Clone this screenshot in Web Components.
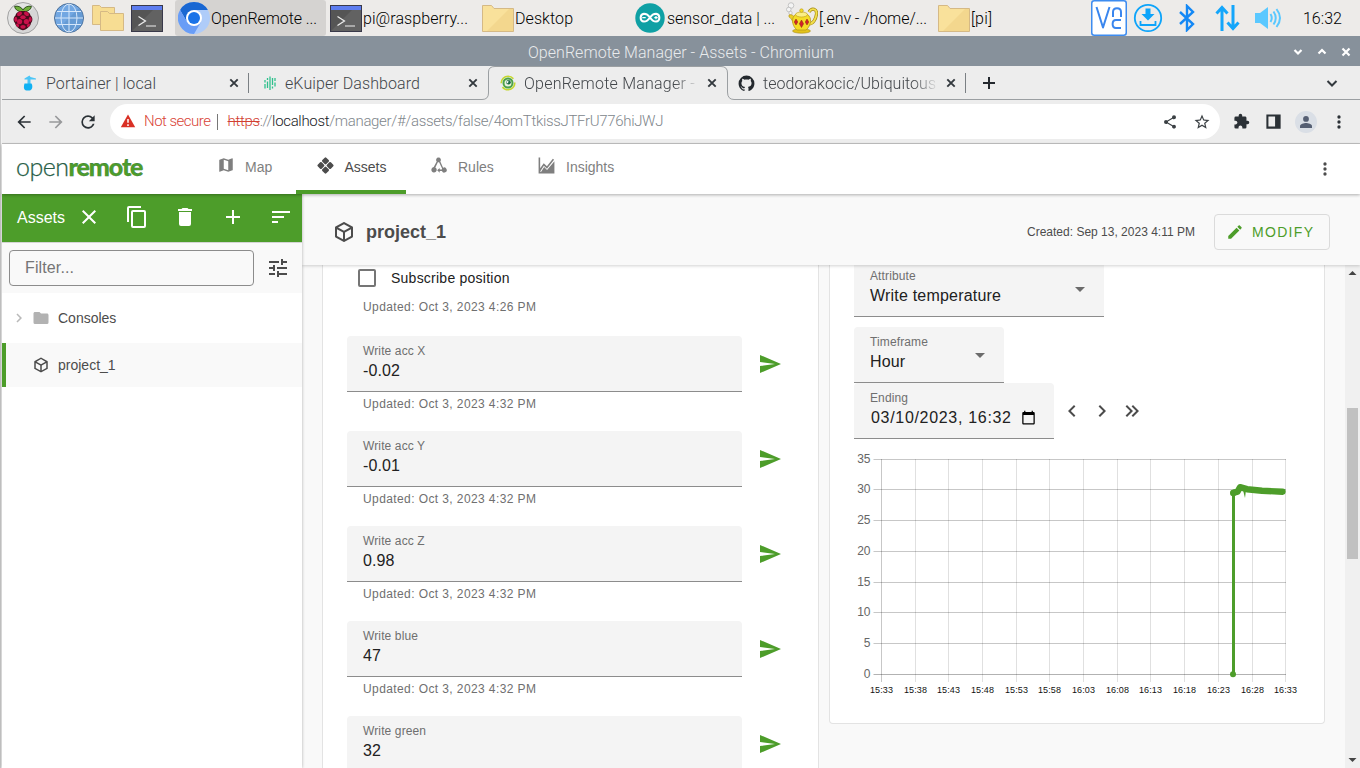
<!DOCTYPE html>
<html lang="en">
<head>
<meta charset="utf-8">
<title>OpenRemote Manager - Assets</title>
<style>
html,body{margin:0;height:100%;overflow:hidden;background:#ededed}
</style>
</head>
<body>
<desktop-screen></desktop-screen>
<script>
const svg = (w, h, vb, body) => `<svg width="${w}" height="${h}" viewBox="${vb}" style="display:block">${body}</svg>`;

/* Multi-coloured pictures used by the task bar and the browser tabs: [width, height, viewBox, body] */
const PICTURES = {
  raspberry: [34, 34, '0 0 34 34', `<defs><linearGradient id="g" x1="0" y1="0" x2="1" y2="1"><stop offset=".5" stop-color="#e3e3e3"/><stop offset=".5" stop-color="#d6d6d6"/></linearGradient></defs>
    <circle cx="17" cy="17" r="15.5" fill="url(#g)" stroke="#a2a2a2"/>
    <path d="M17 11C14 11 9 9.500 8.600 5.300C12 4.600 15.500 6 17 9C18.500 6 22 4.600 25.400 5.300C25 9.500 20 11 17 11Z" fill="#6fae3a" stroke="#1d3a12" stroke-width=".8"/>
    <path d="M17 10C20 9.500 24 11 24.500 14.500C27 16.500 27 20 25 22C24.500 26 20 28.500 17 29.300C14 28.500 9.500 26 9 22C7 20 7 16.500 9.500 14.500C10 11 14 9.500 17 10Z" fill="#4a0a1c"/>
    <g fill="#c8104a"><ellipse cx="13.500" cy="12.800" rx="2.700" ry="1.900" transform="rotate(-30 13.500 12.800)"/><ellipse cx="20.500" cy="12.800" rx="2.700" ry="1.900" transform="rotate(30 20.500 12.800)"/><ellipse cx="17" cy="16.300" rx="2.700" ry="2"/><ellipse cx="9.800" cy="18.300" rx="1.500" ry="2.600"/><ellipse cx="24.200" cy="18.300" rx="1.500" ry="2.600"/><circle cx="13.600" cy="20.600" r="2.600"/><circle cx="20.400" cy="20.600" r="2.600"/><ellipse cx="17" cy="25.800" rx="2.700" ry="1.900"/><ellipse cx="11.600" cy="24.200" rx="1.300" ry="1.900" transform="rotate(-35 11.600 24.200)"/><ellipse cx="22.400" cy="24.200" rx="1.300" ry="1.900" transform="rotate(35 22.400 24.200)"/></g>`],
  globe: [32, 32, '0 0 32 32', `<circle cx="16" cy="16" r="14.500" fill="#72a7e2" stroke="#4d6f97"/><path d="M6 26L26 6A14 14 0 0 1 6 26Z" fill="#5f92cc" opacity=".6"/><g fill="none" stroke="#d6e7fa" stroke-width="1"><path d="M16 2V30M2 16H30M4 9.500H28M4 22.500H28"/><ellipse cx="16" cy="16" rx="8" ry="14"/></g>`],
  folders: [33, 28, '0 0 33 28', `<g fill="#f7dd93" stroke="#d5b985"><path d="M.5 20.500V1.500H7.500L9.500 3.500H22.500V20.500Z"/><path d="M8.500 26.500V7.500H15.500L17.500 9.500H31.500V26.500Z"/></g>`],
  folder: [32, 27, '0 0 32 27', `<path d="M.5 26.500V.5H9.500L12 3.500H31.500V26.500Z" fill="#f9e19b" stroke="#d5b985"/><path d="M5 26L27 4H31V26Z" fill="#f3d78e"/>`],
  terminal: [32, 27, '0 0 32 27', `<rect x=".5" y=".5" width="31" height="26" fill="#555" stroke="#39394a"/><path d="M1 26L22 5H31V26Z" fill="#626262"/><rect x="1" y="1" width="30" height="4" fill="#5d7df0"/><path d="M7.500 11.500L14.500 16L7.500 20.500M15 21H25" fill="none" stroke="#eee" stroke-width="1.200"/>`],
  chromium: [32, 32, '0 0 32 32', `<circle cx="16" cy="16" r="16" fill="#afccf9"/><path d="M16 0A16 16 0 0 1 29.900 8H16L9 20L2.100 8A16 16 0 0 1 16 0Z" fill="#1967d2"/><path d="M2.100 8A16 16 0 0 0 16 32L23 20L16 24L9 20Z" fill="#699df6"/><circle cx="16" cy="16" r="8" fill="#fff"/><circle cx="16" cy="16" r="6" fill="#1a73e8"/>`],
  arduino: [32, 32, '0 0 32 32', `<circle cx="16" cy="16" r="14.700" fill="#0fa0a4"/><path d="M16 15.500C14 12.500 12 11.700 10 11.700A4 4 0 0 0 10 19.600C12 19.600 14 18.500 16 15.500C18 12.500 20 11.700 22 11.700A4 4 0 0 1 22 19.600C20 19.600 18 18.500 16 15.500Z" fill="none" stroke="#fff" stroke-width="2"/><path d="M8.300 15.600H11.700M20.300 15.600H23.700M22 13.900V17.300" stroke="#fff" stroke-width="1.200"/>`],
  teapot: [32, 32, '0 0 32 32', `<g fill="#f4f4f4" stroke="#b9b9b9" stroke-width=".8"><circle cx="5" cy="3.500" r="2.800"/><circle cx="2.800" cy="7.500" r="2.300"/><circle cx="4.500" cy="11" r="1.700"/></g>
    <path d="M23 10C26 5 31 7 30.500 12S27 22 23 22" fill="none" stroke="#a68b14" stroke-width="3.200"/><path d="M23 10C26 5 31 7 30.500 12S27 22 23 22" fill="none" stroke="#f3e04d" stroke-width="1.800"/>
    <path d="M3 13C6 12 8 14 9 16L9 23C6 20 6 16 3 15Z" fill="#ecd023" stroke="#b8981a" stroke-width=".7"/>
    <ellipse cx="15.500" cy="29" rx="9" ry="2.200" fill="#e3c31b" stroke="#a68b14" stroke-width=".6"/>
    <path d="M8 14C9 10.500 22 10.500 23 14C26.500 18 23.500 25.500 20 28H11C7 25 5 18 8 14Z" fill="#f5dc26" stroke="#b8981a" stroke-width=".8"/><ellipse cx="15.500" cy="12.500" rx="6" ry="2.500" fill="#fbef84" stroke="#b8981a" stroke-width=".6"/><circle cx="15.500" cy="8.600" r="1.800" fill="#f5dc26" stroke="#b8981a" stroke-width=".6"/>
    <g fill="#d3202b" stroke="#8a2c10" stroke-width=".5"><path d="M10 17L11.800 20L10 23L8.200 20Z"/><path d="M15.500 18L17.600 21.800L15.500 25.500L13.400 21.800Z"/><path d="M21 17L22.800 20L21 23L19.200 20Z"/></g>`],
  vnc: [36, 36, '0 0 36 36', `<rect x=".75" y=".75" width="34.500" height="34.500" rx="2.500" fill="#fff" stroke="#3d8cf0" stroke-width="1.500"/><g fill="none" stroke="#3a86ee" stroke-width="2"><path d="M5.500 7L12 27.500L18.500 7" stroke-linejoin="round"/><path d="M22 17V12C22 7 30 7 30 12V17M30 20H25C20.500 20 20.500 28 25 28H30"/></g>`],
  download: [30, 30, '0 0 30 30', `<circle cx="15" cy="15" r="13.200" fill="none" stroke="#0da4fa" stroke-width="1.800"/><path d="M12.500 5.500H17.500V11H21.500L15 17.500L8.500 11H12.500Z" fill="#0da4fa"/><path d="M7.500 18V22H22.500V18" fill="none" stroke="#0da4fa" stroke-width="1.800"/>`],
  bluetooth: [18, 28, '0 0 18 28', `<path d="M2 8L15 20L9 26V2L15 8L2 20" fill="none" stroke="#1488f5" stroke-width="2.400"/>`],
  network: [26, 26, '0 0 26 26', `<path d="M7 26V3M1.500 8.500L7 2.500L12.500 8.500M18 0V23M12.500 17.500L18 23.500L23.500 17.500" fill="none" stroke="#14a6fb" stroke-width="3"/>`],
  sound: [28, 24, '0 0 28 24', `<path d="M0 7H5L13 1V23L5 17H0Z" fill="#5ac8ff"/><g fill="none" stroke="#5ac8ff" stroke-width="2"><path d="M15.500 8Q18 12 15.500 16M18.500 5.500Q23 12 18.500 18.500M21.500 3Q28.500 12 21.500 21"/></g>`],
  portainer: [16, 16, '0 0 16 16', `<path d="M2.500 3.500L7.500 .5L8.500 2L14 3.500V4.500H8.500V13H4L5.500 10V4.500H2.500Z" fill="#4cc6f7"/><path d="M2.500 8.500H9.500C11 11 10.500 15 7.500 15.500H4.500C1.500 15 1.500 12 2.500 8.500Z" fill="#10b1f3"/>`],
  kuiper: [16, 16, '0 0 16 16', `<path d="M3.500 5V7.500M3.500 9V13.500M6 3V5M6 6.500V13M8.500 1.500V15M11 3V10M11 11.500V13.500M13.500 3V6M13.500 7.500V11.500" transform="translate(.5 0)" stroke="#2fc08d" stroke-width="1.300"/>`],
  openremote: [16, 16, '0 0 16 16', `<circle cx="8" cy="8" r="6.800" fill="none" stroke="#c4d82f" stroke-width="1.600" stroke-dasharray="17 4"/><circle cx="8" cy="8" r="4.500" fill="#e9f2df" stroke="#4da34a" stroke-width="2"/><circle cx="8.500" cy="7.300" r="2.300" fill="#1d6b45"/><path d="M8 8.500L8.500 5.500L6 7Z" fill="#fff"/>`],
  profile: [22, 22, '0 0 22 22', `<circle cx="11" cy="11" r="11" fill="#dadfe6"/><circle cx="11" cy="7.900" r="2.900" fill="#555f73"/><path d="M5 17V15.200C5 13 9 12.100 11 12.100S17 13 17 15.200V17Z" fill="#555f73"/>`],
  warning: [16, 16, '0 0 16 16', `<path d="M8 .5L15.200 13.300H.8Z" fill="#d93025"/><path d="M8 5V8.800M8 10.300V11.900" stroke="#fff" stroke-width="1.500"/>`]
};

/* Rounded diamond around the point that precedes it */
const DIAMOND = 'm-1,-4q1,-1 2,0l3,3q1,1 0,2l-3,3q-1,1 -2,0l-3,-3q-1,-1 0,-2z';

/* Single-colour glyphs on a 24-unit grid */
const GLYPHS = {
  map: 'M15,19L9,16.89V5L15,7.11M20.5,3C20.44,3 20.39,3 20.34,3L15,5.1L9,3L3.36,4.9C3.15,4.97 3,5.15 3,5.38V20.5A0.5,0.5 0 0,0 3.5,21C3.55,21 3.61,21 3.66,20.97L9,18.9L15,21L20.64,19.1C20.85,19 21,18.85 21,18.62V3.5A0.5,0.5 0 0,0 20.5,3Z',
  cube: 'M21,16.5C21,16.88 20.79,17.21 20.47,17.38L12.57,21.82C12.41,21.94 12.21,22 12,22C11.79,22 11.59,21.94 11.43,21.82L3.53,17.38C3.21,17.21 3,16.88 3,16.5V7.5C3,7.12 3.21,6.79 3.53,6.62L11.43,2.18C11.59,2.06 11.79,2 12,2C12.21,2 12.41,2.06 12.57,2.18L20.47,6.62C20.79,6.79 21,7.12 21,7.5V16.5M12,4.15L6.04,7.5L12,10.85L17.96,7.5L12,4.15M5,15.91L11,19.29V12.58L5,9.21V15.91M19,15.91V9.21L13,12.58V19.29L19,15.91Z',
  close: 'M19,6.41L17.59,5L12,10.59L6.41,5L5,6.41L10.59,12L5,17.59L6.41,19L12,13.41L17.59,19L19,17.59L13.41,12L19,6.41Z',
  copy: 'M19,21H8V7H19M19,5H8A2,2 0 0,0 6,7V21A2,2 0 0,0 8,23H19A2,2 0 0,0 21,21V7A2,2 0 0,0 19,5M16,1H4A2,2 0 0,0 2,3V17H4V3H16V1Z',
  trash: 'M19,4H15.5L14.5,3H9.5L8.5,4H5V6H19M6,19A2,2 0 0,0 8,21H16A2,2 0 0,0 18,19V7H6V19Z',
  plus: 'M19,13H13V19H11V13H5V11H11V5H13V11H19V13Z',
  sort: 'M3,13H15V11H3M3,6V8H21V6M3,18H9V16H3V18Z',
  tune: 'M3,17V19H9V17H3M3,5V7H13V5H3M13,21V19H21V17H13V15H11V21H13M7,9V11H3V13H7V15H9V9H7M21,13V11H11V13H21M15,9H17V7H21V5H17V3H15V9Z',
  folder: 'M10,4H4C2.89,4 2,4.89 2,6V18A2,2 0 0,0 4,20H20A2,2 0 0,0 22,18V8C22,6.89 21.1,6 20,6H12L10,4Z',
  send: 'M2,21L23,12L2,3V10L17,12L2,14V21Z',
  pencil: 'M20.71,7.04C21.1,6.65 21.1,6 20.71,5.63L18.37,3.29C18,2.9 17.35,2.9 16.96,3.29L15.12,5.12L18.87,8.87M3,17.25V21H6.75L17.81,9.93L14.06,6.18L3,17.25Z',
  dots: 'M12,16A2,2 0 0,1 14,18A2,2 0 0,1 12,20A2,2 0 0,1 10,18A2,2 0 0,1 12,16M12,10A2,2 0 0,1 14,12A2,2 0 0,1 12,14A2,2 0 0,1 10,12A2,2 0 0,1 12,10M12,4A2,2 0 0,1 14,6A2,2 0 0,1 12,8A2,2 0 0,1 10,6A2,2 0 0,1 12,4Z',
  left: 'M15.41,16.58L10.83,12L15.41,7.41L14,6L8,12L14,18L15.41,16.58Z',
  right: 'M8.59,16.58L13.17,12L8.59,7.41L10,6L16,12L10,18L8.59,16.58Z',
  dright: 'M5.59,7.41L7,6L13,12L7,18L5.59,16.59L10.17,12L5.59,7.41M11.59,7.41L13,6L19,12L13,18L11.59,16.59L16.17,12L11.59,7.41Z',
  back: 'M20,11V13H8L13.5,18.5L12.08,19.92L4.16,12L12.08,4.08L13.5,5.5L8,11H20Z',
  forward: 'M4,11V13H16L10.5,18.5L11.92,19.92L19.84,12L11.92,4.08L10.5,5.5L16,11H4Z',
  reload: 'M17.65,6.35C16.2,4.9 14.21,4 12,4A8,8 0 0,0 4,12A8,8 0 0,0 12,20C15.73,20 18.84,17.45 19.73,14H17.65C16.83,16.33 14.61,18 12,18A6,6 0 0,1 6,12A6,6 0 0,1 12,6C13.66,6 15.14,6.69 16.22,7.78L13,11H20V4L17.65,6.35Z',
  share: 'M18,16.08C17.24,16.08 16.56,16.38 16.04,16.85L8.91,12.7C8.96,12.47 9,12.24 9,12C9,11.76 8.96,11.53 8.91,11.3L15.96,7.19C16.5,7.69 17.21,8 18,8A3,3 0 0,0 21,5A3,3 0 0,0 18,2A3,3 0 0,0 15,5C15,5.24 15.04,5.47 15.09,5.7L8.04,9.81C7.5,9.31 6.79,9 6,9A3,3 0 0,0 3,12A3,3 0 0,0 6,15C6.79,15 7.5,14.69 8.04,14.19L15.16,18.34C15.11,18.55 15.08,18.77 15.08,19C15.08,20.61 16.39,21.91 18,21.91C19.61,21.91 20.92,20.61 20.92,19A2.92,2.92 0 0,0 18,16.08Z',
  star: 'M12,15.39L8.24,17.66L9.23,13.38L5.91,10.5L10.29,10.13L12,6.09L13.71,10.13L18.09,10.5L14.77,13.38L15.76,17.66M22,9.24L14.81,8.63L12,2L9.19,8.63L2,9.24L7.45,13.97L5.82,21L12,17.27L18.18,21L16.54,13.97L22,9.24Z',
  puzzle: 'M20.5,11H19V7C19,5.89 18.1,5 17,5H13V3.5A2.5,2.5 0 0,0 10.5,1A2.5,2.5 0 0,0 8,3.5V5H4A2,2 0 0,0 2,7V10.8H3.5C5,10.8 6.2,12 6.2,13.5C6.2,15 5,16.2 3.5,16.2H2V20A2,2 0 0,0 4,22H7.8V20.5C7.8,19 9,17.8 10.5,17.8C12,17.8 13.2,19 13.2,20.5V22H17A2,2 0 0,0 19,20V16H20.5A2.5,2.5 0 0,0 23,13.5A2.5,2.5 0 0,0 20.5,11Z',
  panel: 'M3,3H21V21H3V3M5.600,5.600V18.400H14V5.600H5.600Z',
  caret: 'M7,10L12,15L17,10H7Z',
  calendar: 'M20,3h-1V1h-2v2H7V1H5v2H4C2.9,3 2,3.9 2,5v16c0,1.100 .9,2 2,2h16c1.100,0 2,-.9 2,-2V5C22,3.900 21.100,3 20,3zM20,21H4V8h16V21z',
  github: 'M12,2A10,10 0 0,0 2,12C2,16.42 4.87,20.17 8.84,21.5C9.34,21.58 9.5,21.27 9.5,21C9.5,20.77 9.5,20.14 9.5,19.31C6.73,19.91 6.14,17.97 6.14,17.97C5.68,16.81 5.03,16.5 5.03,16.5C4.12,15.88 5.1,15.9 5.1,15.9C6.1,15.97 6.63,16.93 6.63,16.93C7.5,18.45 8.97,18 9.54,17.76C9.63,17.11 9.89,16.67 10.17,16.42C7.95,16.17 5.62,15.31 5.62,11.5C5.62,10.39 6,9.5 6.65,8.79C6.55,8.54 6.2,7.5 6.75,6.15C6.75,6.15 7.59,5.88 9.5,7.17C10.29,6.95 11.15,6.84 12,6.84C12.85,6.84 13.71,6.95 14.5,7.17C16.41,5.88 17.25,6.15 17.25,6.15C17.8,7.5 17.45,8.54 17.35,8.79C18,9.5 18.38,10.39 18.38,11.5C18.38,15.32 16.04,16.16 13.81,16.41C14.17,16.72 14.5,17.33 14.5,18.26C14.5,19.6 14.5,20.68 14.5,21C14.5,21.27 14.66,21.59 15.17,21.5C19.14,20.16 22,16.42 22,12A10,10 0 0,0 12,2Z',
  assets: ['12,6.200', '12,17.800', '6.200,12', '17.800,12'].map(c => `M${c}${DIAMOND}`).join(''),
  rules: 'M12,2A3,3 0 0 1 14.300,7L17.800,14.800A3.200,3.200 0 1 1 16.300,19H13.500V21L10.300,18L13.500,15V17H16.200L16.500,15.700L12.800,7.900A3,3 0 0 1 11.200,7.900L8,14.400A3.400,3.400 0 1 1 6,14L9.700,7A3,3 0 0 1 12,2Z',
  insights: 'M2,2H4V15.500L8.500,9L12.500,13L20,3.500L21.500,4.700L12.600,16L8.700,12.200L4,19.500V20H22V22H2ZM4.500,21L9,14L12.700,17.600L22,6.500V21Z'
};

const define = (tag, render, extra) => customElements.define(tag, class extends HTMLElement {
  constructor() { super(); this.attachShadow({ mode: 'open' }); }
  connectedCallback() {
    this.shadowRoot.innerHTML = render(n => this.getAttribute(n) ?? '');
    if (extra) extra.call(this);
  }
});

define('ui-pic', a => { const p = PICTURES[a('name')]; return `<style>:host{display:block;flex:none}</style>` + svg(...p); });

define('ui-glyph', a => { const s = a('size') || 24;
  return `<style>:host{display:block;flex:none;width:${s}px;height:${s}px}</style>` + svg(s, s, '0 0 24 24', `<path fill="currentColor" fill-rule="${a('name') === 'panel' || a('name') === 'calendar' ? 'evenodd' : 'nonzero'}" d="${GLYPHS[a('name')]}"/>`); });

/* ---------- task bar ---------- */
define('task-item', a => `<style>
  :host{display:flex;align-items:center;box-sizing:border-box;width:151px;height:36px;padding-left:3px;border-radius:3px;gap:1px}
  :host([active]){background:#d5d3d1}
  .pic{flex:none;width:32px;display:flex;justify-content:center}
</style><span class="pic"><ui-pic name="${a('pic')}"></ui-pic></span><slot></slot>`);

define('task-bar', () => `<style>
  :host{display:flex;align-items:center;height:36px;background:#edebe9;color:#000;font:300 16px Roboto,sans-serif}
  .launch{display:flex;align-items:center;width:169px;padding-left:6px;box-sizing:border-box;flex:none}
  .launch>:nth-child(2){margin-left:13px}.launch>:nth-child(3){margin-left:7px}.launch>:nth-child(4){margin-left:6px}
  .tasks{display:flex;gap:1px;margin-left:6px}
  .tray{display:flex;align-items:center;margin-left:auto;padding-right:18px}
</style>
<div class="launch"><ui-pic name="raspberry"></ui-pic><ui-pic name="globe"></ui-pic><ui-pic name="folders"></ui-pic><ui-pic name="terminal"></ui-pic></div>
<div class="tasks">
  <task-item pic="chromium" active><fit-text w="106">OpenRemote ...</fit-text></task-item>
  <task-item pic="terminal"><fit-text w="105">pi@raspberry...</fit-text></task-item>
  <task-item pic="folder"><fit-text w="58">Desktop</fit-text></task-item>
  <task-item pic="arduino"><fit-text w="108">sensor_data | ...</fit-text></task-item>
  <task-item pic="teapot"><fit-text w="108">[.env - /home/...</fit-text></task-item>
  <task-item pic="folder"><fit-text w="21">[pi]</fit-text></task-item>
</div>
<div class="tray">
  <ui-pic name="vnc"></ui-pic>
  <ui-pic name="download" style="margin-left:6px"></ui-pic>
  <ui-pic name="bluetooth" style="margin-left:15px"></ui-pic>
  <ui-pic name="network" style="margin-left:19px"></ui-pic>
  <ui-pic name="sound" style="margin-left:14px"></ui-pic>
  <fit-text w="39" style="margin-left:20px">16:32</fit-text>
</div>`);

define('title-bar', () => `<style>
  :host{display:grid;grid-template-columns:93px 1fr 91px;align-items:center;height:30px;background:#87919b;color:#e9ebed;font:300 16px Roboto,sans-serif}
  .t{justify-self:center;padding-top:2px}
  .b{display:flex;justify-content:flex-end;gap:8px;padding-right:6px;padding-top:2px;color:#fff}
</style><span></span><fit-text class="t" w="306">OpenRemote Manager - Assets - Chromium</fit-text>
<div class="b">${['M4.500 6L8 9.500L11.500 6', 'M4.500 9.500L8 6L11.500 9.500', 'M4.500 4.500L11.500 11.500M11.500 4.500L4.500 11.500'].map(d => svg(16, 16, '0 0 16 16', `<path d="${d}" fill="none" stroke="#fff" stroke-width="2.200"/>`)).join('')}</div>`);

/* ---------- browser ---------- */
define('browser-tab', a => `<style>
  :host{display:grid;grid-template-columns:16px 173px 12px;column-gap:9px;align-items:center;width:239px;height:34px;box-sizing:border-box;padding-left:11px;position:relative}
  .x{color:#33393e;justify-self:center}
  .l{overflow:hidden;white-space:nowrap}
  :host([fade]) .l{-webkit-mask:linear-gradient(90deg,#000 150px,transparent 176px);mask:linear-gradient(90deg,#000 150px,transparent 176px)}
  :host([sep])::after{content:"";position:absolute;right:0;top:7px;width:1px;height:20px;background:#7b8084}
</style>${a('glyph') ? `<ui-glyph name="github" size="19" style="color:#24292e;margin-left:-1px"></ui-glyph>` : `<ui-pic name="${a('pic')}" style="margin-left:1px"></ui-pic>`}
<span class="l"><slot></slot></span><span class="x">${svg(10, 10, '0 0 10 10', '<path d="M1.300 1.300L8.700 8.700M8.700 1.300L1.300 8.700" stroke="currentColor" stroke-width="1.900"/>')}</span>`);

define('tab-strip', () => `<style>
  :host{display:flex;align-items:center;height:34px;padding-left:8px;position:relative;background:#ededed;color:#42464a;font:300 16px Roboto,sans-serif}
  .line{position:absolute;left:0;top:0}
  .plus{margin-left:11px;color:#24292e}
  .menu{margin-left:auto;margin-right:20px}
</style>
<div class="line">${svg(1358, 34, '0 0 1358 34', '<path d="M0 33.500H480Q486.500 33.500 486.500 27V6Q486.500 .5 493 .5H719Q725.500 .5 725.500 7V26Q725.500 33.500 732 33.500H1358" fill="none" stroke="#9b9fa2"/>')}</div>
<browser-tab pic="portainer" sep><fit-text w="110">Portainer | local</fit-text></browser-tab>
<browser-tab pic="kuiper"><fit-text w="135">eKuiper Dashboard</fit-text></browser-tab>
<browser-tab pic="openremote" fade><fit-text w="224">OpenRemote Manager - Assets</fit-text></browser-tab>
<browser-tab glyph="github" fade sep><fit-text w="173">teodorakocic/Ubiquitous</fit-text></browser-tab>
<span class="plus">${svg(24, 24, '0 0 24 24', '<path d="M12 6V18M6 12H18" stroke="currentColor" stroke-width="2"/>')}</span>
<span class="menu">${svg(16, 16, '0 0 16 16', '<path d="M3.500 6L8 10.500L12.500 6" fill="none" stroke="#33393e" stroke-width="2"/>')}</span>`);

define('nav-bar', () => `<style>
  :host{display:flex;align-items:center;height:43px;border-bottom:1px solid #c2c2c2;background:#ededed;color:#2b3136;font:300 15px Roboto,sans-serif}
  .nav{display:flex;gap:12px;padding-left:12px;width:108px;box-sizing:border-box;flex:none}
  .box{display:flex;align-items:center;width:1110px;height:35px;border-radius:18px;background:#fff;box-sizing:border-box;padding-left:10px;flex:none}
  .box fit-text{padding-bottom:1px}
  .sep{width:1px;height:16px;background:#777;margin:0 9px 0 7px}
  .url{color:#80868b}.url b{font-weight:300;color:#202124}.url s{color:#d23f31;text-decoration-thickness:1px}
  .in{margin-left:auto;display:flex;gap:15px;padding-right:9px;color:#3b4044}
  .ext{display:flex;align-items:center;gap:12px;padding-left:12px}
</style>
<div class="nav"><ui-glyph name="back" size="20"></ui-glyph><ui-glyph name="forward" size="20" style="color:#98999b"></ui-glyph><ui-glyph name="reload" size="20"></ui-glyph></div>
<div class="box"><ui-pic name="warning"></ui-pic><fit-text w="67" style="color:#d94436;margin-left:8px">Not secure</fit-text><span class="sep"></span>
<fit-text class="url" w="436"><s>https</s>://<b>localhost</b>/manager/#/assets/false/4omTtkissJTFrU776hiJWJ</fit-text>
<span class="in"><ui-glyph name="share" size="16" style="margin-top:1px"></ui-glyph><ui-glyph name="star" size="18"></ui-glyph></span></div>
<div class="ext"><ui-glyph name="puzzle" size="17" style="margin-right:3px;margin-left:1px"></ui-glyph><ui-glyph name="panel" size="19" style="margin-right:0;margin-left:-1px"></ui-glyph><ui-pic name="profile"></ui-pic><ui-glyph name="dots" size="20"></ui-glyph></div>`);

/* ---------- manager application ---------- */
define('nav-item', a => `<style>
  :host{display:flex;box-sizing:border-box;width:110px;height:50px;border-bottom:4px solid transparent;color:#7f7f7f;font:14px "Liberation Sans",Arial,sans-serif;position:relative}
  :host([active]){color:#4c4c4c;border-color:#4d9d2a}
  ui-glyph{margin:12px 10px 0 19px}
  span{line-height:46px}
</style><ui-glyph name="${a('icon')}" size="${a('size') || 18}"></ui-glyph><span><slot></slot></span>`);

define('app-header', () => `<style>
  :host{display:flex;height:50px;background:#fff;position:relative;z-index:3;box-shadow:0 1px 3px rgba(0,0,0,.3)}
  .logo{width:180px;padding-left:14px;box-sizing:border-box;font:300 25px/45px Lato,sans-serif;color:#275e47;flex:none;display:flex}
  .logo fit-text:first-child{-webkit-text-stroke:.25px #275e47}
  .logo b{font-weight:900;color:#4d9d2a}
  .logo b fit-text{-webkit-text-stroke:0}
  .items{display:flex;margin-left:16px}
  .more{margin:15px 25px 0 auto;color:#4c4c4c}
</style>
<div class="logo"><fit-text w="53">open</fit-text><b><fit-text w="75">remote</fit-text></b></div>
<div class="items">
 <nav-item icon="map" style="width:98px">Map</nav-item>
 <nav-item icon="assets" size="19" style="padding-left:.5px" active>Assets</nav-item>
 <nav-item icon="rules" size="19" style="padding-left:3px;margin-left:1px;width:105px">Rules</nav-item>
 <nav-item icon="insights" size="19" style="padding-left:6px;width:120px">Insights</nav-item>
</div>
<ui-glyph class="more" name="dots" size="20"></ui-glyph>`);

define('asset-node', a => `<style>
  :host{display:grid;grid-template-columns:26px 16px 1fr;align-items:center;height:${a('h')}px;box-sizing:border-box;border-left:4px solid transparent;color:#4c4c4c;font:14px "Liberation Sans",Arial,sans-serif}
  :host([selected]){background:#f9f9f9;border-color:#4d9d2a}
  .e{color:#b9b9b9;margin-left:4px}
  .i{color:${a('tone') || '#4c4c4c'}}
  .t{padding-left:10px}
</style><span class="e">${a('expand') ? '<ui-glyph name="right" size="18"></ui-glyph>' : ''}</span><ui-glyph class="i" name="${a('icon')}" size="${a('size')}"></ui-glyph><span class="t"><slot></slot></span>`);

define('asset-tree', () => `<style>
  :host{display:block;width:300px;flex:none;background:#fff;position:relative;z-index:2;box-shadow:0 0 3px rgba(0,0,0,.3);font:16px "Liberation Sans",Arial,sans-serif}
  header{display:flex;align-items:center;height:48px;background:#4d9d2a;color:#fff;padding:0 0 2px 15px;box-sizing:border-box}
  header ui-glyph{margin-right:24px}
  header span{width:60px;flex:none;padding-top:1px}
  .f{display:flex;align-items:center;height:51px;box-sizing:border-box;border-top:1px solid #d4d4d4;background:#f9f9f9;padding-left:7px;color:#4c4c4c}
  .in{box-sizing:border-box;width:245px;height:36px;border:1px solid #8c8c8c;border-radius:4px;padding-left:15px;line-height:34px;color:#757575;margin-right:12px}
</style>
<header><span>Assets</span><ui-glyph name="close"></ui-glyph><ui-glyph name="copy"></ui-glyph><ui-glyph name="trash"></ui-glyph><ui-glyph name="plus"></ui-glyph><ui-glyph name="sort" style="margin-right:0"></ui-glyph></header>
<div class="f"><div class="in"><fit-text w="49">Filter...</fit-text></div><ui-glyph name="tune"></ui-glyph></div>
<asset-node h="50" icon="folder" size="18" tone="#b2b2b2" expand="1">Consoles</asset-node>
<asset-node h="44" icon="cube" size="18" selected>project_1</asset-node>`);

define('asset-title', () => `<style>
  :host{display:flex;align-items:center;height:71px;flex:none;background:#f9f9f9;color:#4c4c4c;position:relative;z-index:1;box-shadow:0 1px 3px rgba(0,0,0,.18);padding:5px 30px 0 30px;box-sizing:border-box}
  h1{margin:0 auto 0 10px;font-size:18px;line-height:22px}
  .c{font-size:12px;margin-right:19px}
  .m{display:flex;align-items:center;box-sizing:border-box;width:116px;height:36px;border:1px solid #dbdbdb;border-radius:4px;color:#4d9d2a;font-size:14px;padding-left:11px;gap:8px}
</style><ui-glyph name="cube"></ui-glyph><h1>project_1</h1><fit-text class="c" w="168">Created: Sep 13, 2023 4:11 PM</fit-text>
<div class="m"><ui-glyph name="pencil" size="18"></ui-glyph><fit-text w="61">MODIFY</fit-text></div>`);

define('filled-field', a => `<style>
  :host{display:block;box-sizing:border-box;height:56px;background:#f4f4f4;border-bottom:1px solid #8c8c8c;border-radius:4px 4px 0 0;padding:8px 16px 0;position:relative;font-size:16px;color:#212121}
  .l{font-size:12px;line-height:14px;color:#6f6f6f;letter-spacing:.12px;height:14px}
  .v{display:flex;line-height:18px;margin-top:4px;letter-spacing:.12px}
  .d{position:absolute;right:12px;top:16px;color:#6b6b6b}
</style><div class="l">${a('label')}</div><div class="v"><slot></slot></div>${a('kind') === 'select' ? '<ui-glyph class="d" name="caret"></ui-glyph>' : ''}`);

define('attribute-row', a => `<style>
  :host{display:block;height:95px}
  .r{display:grid;grid-template-columns:395px 1fr;align-items:center}
  ui-glyph{color:#4d9d2a;margin-left:16px}
  .h{font-size:12px;line-height:14px;color:#6f6f6f;padding-left:16px;margin-top:5px}
</style><div class="r"><filled-field label="${a('label')}">${a('value')}</filled-field><ui-glyph name="send"></ui-glyph></div>${a('updated') ? `<div class="h"><fit-text w="173">Updated: ${a('updated')}</fit-text></div>` : ''}`);

define('attribute-card', () => `<style>
  :host{display:block;flex:1;background:#fff;border:1px solid #e3e3e3;border-width:0 1px;padding:0 24px;overflow:hidden}
  .cb{display:flex;align-items:center;height:26px;padding-left:11px;font-size:14px;color:#212121}
  .cb i{box-sizing:border-box;width:18px;height:18px;border:2px solid #757575;border-radius:2px;margin-right:15px}
  .h{font-size:12px;line-height:14px;color:#6f6f6f;padding-left:16px;margin:9px 0 22px}
  attribute-row:last-child{height:auto}
</style><div class="cb"><i></i><fit-text w="118.500">Subscribe position</fit-text></div><div class="h"><fit-text w="173">Updated: Oct 3, 2023 4:26 PM</fit-text></div>
${[['acc X', '-0.02'], ['acc Y', '-0.01'], ['acc Z', '0.98'], ['blue', '47']].map(([n, v]) => `<attribute-row label="Write ${n}" value="${v}" updated="Oct 3, 2023 4:32 PM"></attribute-row>`).join('')}
<attribute-row label="Write green" value="32"></attribute-row>`);

define('history-chart', () => {
  const ys = [459.5, 489.5, 520.5, 551.5, 582.5, 612.5, 643.5, 674.5];
  const xs = [881.5, 915.5, 948.5, 982.5, 1016.5, 1049.5, 1083.5, 1117.5, 1150.5, 1184.5, 1218.5, 1252.5, 1285.5];
  const ts = ['15:33', '15:38', '15:43', '15:48', '15:53', '15:58', '16:03', '16:08', '16:13', '16:18', '16:23', '16:28', '16:33'];
  return `<style>:host{display:block;font-family:"Liberation Sans",Arial,sans-serif}</style>` + svg(460, 284, '854 439 460 284',
    xs.map((x, i) => `<path d="M${x} 459V682" stroke="rgba(0,0,0,${i ? .12 : .22})"/><text x="${x}" y="693" font-size="9" textLength="23" text-anchor="middle" fill="#111">${ts[i]}</text>`).join('') +
    ys.map((y, i) => `<path d="M873.500 ${y}H1286" stroke="rgba(0,0,0,${i === 7 ? .3 : .22})"/><text x="870.500" y="${y + 3.500}" font-size="12" text-anchor="end" fill="#666">${35 - i * 5}</text>`).join('') +
    `<g fill="#4d9d2a"><circle cx="1233" cy="674.200" r="3"/><circle cx="1233.200" cy="493" r="3.200"/><path d="M1243 490L1245 498L1246 490Z"/></g><path d="M1233.500 674V493" stroke="#4d9d2a" stroke-width="3"/><path d="M1234 492.700L1237.500 491.700L1240 487.200L1247 489.200L1262 490.700L1282.500 491.700" fill="none" stroke="#4d9d2a" stroke-width="6.400" stroke-linejoin="round" stroke-linecap="round"/>`);
});

define('history-card', () => `<style>
  :host{display:block;flex:1;height:459px;background:#fff;border:1px solid #e3e3e3;border-top:0;border-radius:0 0 4px 4px;padding:0 24px;overflow:hidden}
  filled-field{padding-left:16.500px}
  .a{width:250px;margin-top:-4px}.t{width:150px;margin-top:10px}
  .e{display:flex;align-items:center;color:#4c4c4c}
  .e filled-field{width:200px;flex:none}
  .e>ui-glyph{margin-right:6px}
  .cal{color:#000;margin:1px 0 0 9.500px}
</style>
<filled-field class="a" kind="select" label="Attribute"><fit-text w="131">Write temperature</fit-text></filled-field>
<filled-field class="t" kind="select" label="Timeframe">Hour</filled-field>
<div class="e"><filled-field label="Ending"><fit-text w="140" style="margin-left:1px">03/10/2023, 16:32</fit-text><ui-glyph class="cal" name="calendar" size="15"></ui-glyph></filled-field>
<ui-glyph name="left" style="margin-left:6px"></ui-glyph><ui-glyph name="right"></ui-glyph><ui-glyph name="dright"></ui-glyph></div>
<history-chart></history-chart>`);

define('scroll-rail', () => `<style>
  :host{display:grid;grid-template-rows:15px 128px 151px 1fr 15px;justify-items:center;align-items:center;width:15px;flex:none;background:#f0f0f0}
  i{width:11px;height:100%;background:#c1c1c1}
</style>${svg(9, 5, '0 0 9 5', '<path d="M.5 5L4.500 1L8.500 5Z" fill="#444"/>')}<span></span><i></i><span></span>${svg(9, 5, '0 0 9 5', '<path d="M.5 0L4.500 4L8.500 0Z" fill="#444"/>')}`);

define('asset-viewer', () => `<style>
  :host{display:flex;flex-direction:column;flex:1;min-width:0;background:#f9f9f9}
  .b{display:flex;flex:1;min-height:0}
  .g{display:flex;flex:1;min-width:0;gap:10px;padding:0 20px;align-items:flex-start}
  .g>*{min-width:0;box-sizing:border-box}
  .g attribute-card{align-self:stretch}
</style><asset-title></asset-title><div class="b"><div class="g"><attribute-card></attribute-card><history-card></history-card></div><scroll-rail></scroll-rail></div>`);

define('desktop-screen', () => `<style>
  :host{display:flex;flex-direction:column;width:1360px;height:768px;overflow:hidden;font-family:"Liberation Sans",Arial,sans-serif}
  .w{display:flex;flex-direction:column;flex:1;min-height:0;border-left:1px solid #c9c9c9;padding-left:1px;background:#f2f2f2}
  .m{display:flex;flex:1;min-height:0}
</style><task-bar></task-bar><title-bar></title-bar>
<div class="w"><tab-strip></tab-strip><nav-bar></nav-bar><app-header></app-header><div class="m"><asset-tree></asset-tree><asset-viewer></asset-viewer></div></div>`);

/* A one-line label that spreads its tracking so that the text spans the width "w" */
define('fit-text', () => `<style>:host{display:inline-block;white-space:nowrap;flex:none}</style><slot></slot>`, function () {
  this.style.letterSpacing = '0';
  const want = +this.getAttribute('w'), n = this.textContent.length - 1;
  this.style.letterSpacing = ((want - this.getBoundingClientRect().width) / n).toFixed(3) + 'px';
});
</script>
</body>
</html>
